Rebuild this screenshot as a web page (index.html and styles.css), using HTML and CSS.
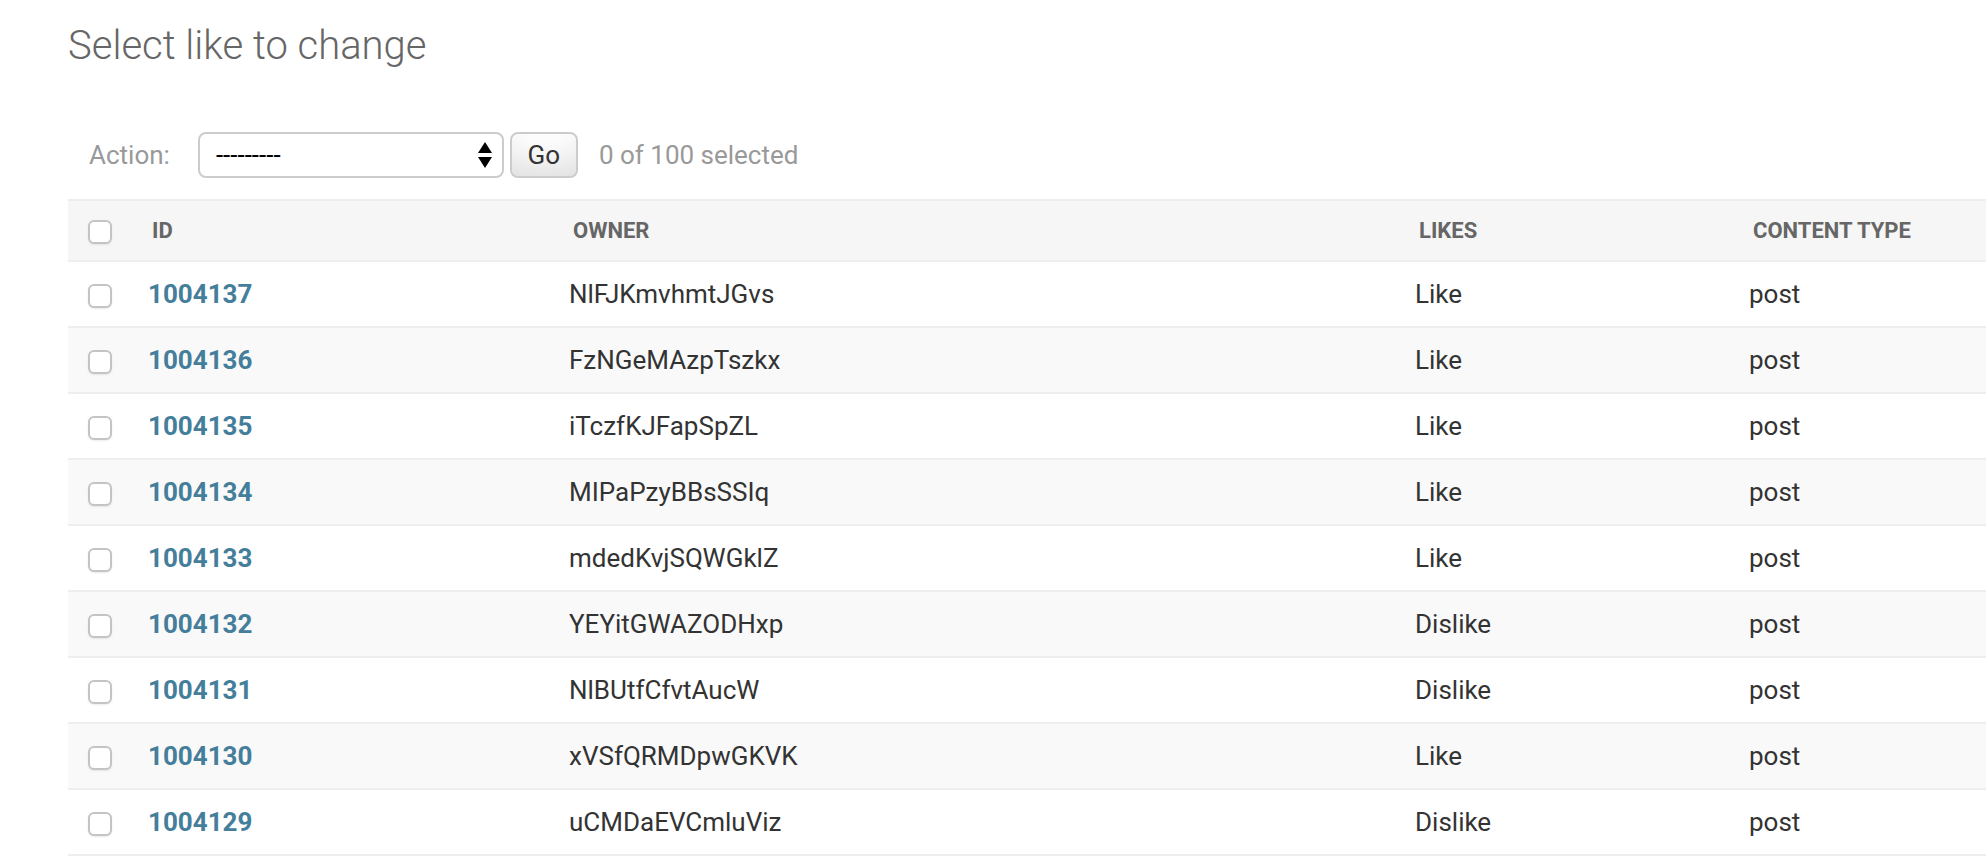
FILE: index.html
```html
<!DOCTYPE html>
<html lang="en">
<head>
    <meta charset="UTF-8">
    <title>Select like to change</title>
    <link rel="stylesheet" href="styles.css">
</head>
<body>
    <div class="content">
        <h1>Select like to change</h1>

        <!-- Actions -->
        <div class="actions">
            <label>Action:</label>
            <div class="select">
                <span>---------</span>
                <svg width="16" height="26" viewBox="0 0 16 26">
                    <path d="M8 0 L15 11 L1 11 Z" fill="#000"/>
                    <path d="M1 15 L15 15 L8 26 Z" fill="#000"/>
                </svg>
            </div>
            <button class="go">Go</button>
            <span class="counter">0 of 100 selected</span>
        </div>

        <!-- Results -->
        <table class="result-list">
            <thead>
                <tr>
                    <th class="col-check"><span class="box"></span></th>
                    <th class="col-id">ID</th>
                    <th class="col-owner">Owner</th>
                    <th class="col-likes">Likes</th>
                    <th>Content type</th>
                </tr>
            </thead>
            <tbody>
                <tr class="row1"><td class="col-check"><span class="box"></span></td><th><a href="#">1004137</a></th><td>NlFJKmvhmtJGvs</td><td>Like</td><td>post</td></tr>
                <tr class="row2"><td class="col-check"><span class="box"></span></td><th><a href="#">1004136</a></th><td>FzNGeMAzpTszkx</td><td>Like</td><td>post</td></tr>
                <tr class="row1"><td class="col-check"><span class="box"></span></td><th><a href="#">1004135</a></th><td>iTczfKJFapSpZL</td><td>Like</td><td>post</td></tr>
                <tr class="row2"><td class="col-check"><span class="box"></span></td><th><a href="#">1004134</a></th><td>MIPaPzyBBsSSIq</td><td>Like</td><td>post</td></tr>
                <tr class="row1"><td class="col-check"><span class="box"></span></td><th><a href="#">1004133</a></th><td>mdedKvjSQWGklZ</td><td>Like</td><td>post</td></tr>
                <tr class="row2"><td class="col-check"><span class="box"></span></td><th><a href="#">1004132</a></th><td>YEYitGWAZODHxp</td><td>Dislike</td><td>post</td></tr>
                <tr class="row1"><td class="col-check"><span class="box"></span></td><th><a href="#">1004131</a></th><td>NlBUtfCfvtAucW</td><td>Dislike</td><td>post</td></tr>
                <tr class="row2"><td class="col-check"><span class="box"></span></td><th><a href="#">1004130</a></th><td>xVSfQRMDpwGKVK</td><td>Like</td><td>post</td></tr>
                <tr class="row1"><td class="col-check"><span class="box"></span></td><th><a href="#">1004129</a></th><td>uCMDaEVCmluViz</td><td>Dislike</td><td>post</td></tr>
            </tbody>
        </table>
    </div>
</body>
</html>
```

FILE: styles.css
```css
body {
    margin: 0;
    background: #fff;
    font-family: Roboto, "Liberation Sans", sans-serif;
    color: #333;
    overflow: hidden;
}

.content {
    padding: 22px 0 0 68px;
}

h1 {
    margin: 0 0 41px 0;
    font-size: 40px;
    line-height: 48px;
    font-weight: 300;
    color: #666;
}

/* actions bar */
.actions {
    display: flex;
    align-items: center;
    height: 48px;
    padding: 20px 0 20px 21px;
    font-size: 26px;
    color: #999;
}

.select {
    display: flex;
    align-items: center;
    justify-content: space-between;
    box-sizing: border-box;
    width: 306px;
    height: 46px;
    margin-left: 28px;
    padding: 0 9px 0 16px;
    border: 2px solid #ccc;
    border-radius: 8px;
    color: #000;
    font-size: 26px;
}

.go {
    box-sizing: border-box;
    width: 68px;
    height: 46px;
    margin-left: 6px;
    padding: 0;
    border: 2px solid #ccc;
    border-radius: 8px;
    background: #fff;
    box-shadow: 0 -30px 40px -20px rgba(0, 0, 0, 0.15) inset;
    font-family: Roboto, "Liberation Sans", sans-serif;
    font-size: 26px;
    color: #333;
}

.counter {
    margin-left: 21px;
}

/* table */
.result-list {
    width: 100%;
    border-collapse: collapse;
    table-layout: fixed;
}

.result-list th,
.result-list td {
    box-sizing: border-box;
}

.result-list thead th {
    height: 61px;
    padding: 0 20px;
    background: #f6f6f6;
    border-top: 2px solid #eee;
    border-bottom: 2px solid #eee;
    font-size: 22px;
    font-weight: 700;
    text-transform: uppercase;
    text-align: left;
    color: #666;
    white-space: nowrap;
}

.result-list td,
.result-list tbody th {
    height: 64px;
    padding: 16px;
    border-bottom: 2px solid #eee;
    font-size: 26px;
    line-height: 32px;
    font-weight: 400;
    text-align: left;
}

.result-list tbody th a {
    color: #447e9b;
    font-weight: 700;
    text-decoration: none;
}

.row1 { background: #fff; }
.row2 { background: #f9f9f9; }

.result-list .col-check {
    width: 64px;
    padding: 0;
    text-align: center;
}

.col-id { width: 421px; }
.col-owner { width: 846px; }
.col-likes { width: 334px; }

.box {
    display: inline-block;
    box-sizing: border-box;
    width: 24px;
    height: 24px;
    vertical-align: middle;
    border: 2px solid #c4c4c4;
    border-radius: 6px;
    background: #fff;
    box-shadow: 0 1px 2px rgba(0, 0, 0, 0.08);
}
```
